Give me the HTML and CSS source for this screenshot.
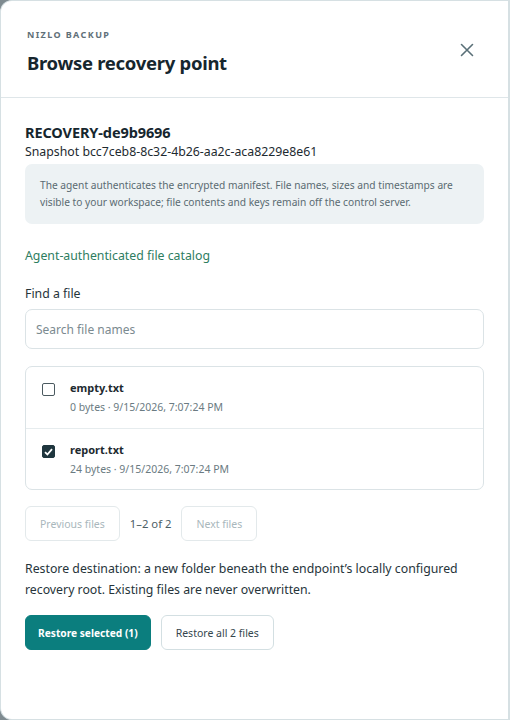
FILE: index.html
```html
<!DOCTYPE html>
<html lang="en">
<head>
    <meta charset="UTF-8">
    <meta name="viewport" content="width=device-width, initial-scale=1.0">
    <title>Browse recovery point</title>
    <link rel="stylesheet" href="styles.css">
</head>
<body>
    <div class="sheet">
        <div class="sheet-header">
            <div>
                <div class="eyebrow">NIZLO BACKUP</div>
                <h1 class="title">Browse recovery point</h1>
            </div>
            <button class="close" aria-label="Close">
                <svg width="14" height="14" viewBox="0 0 14 14">
                    <path d="M1.5 1.5 L12.5 12.5 M12.5 1.5 L1.5 12.5" stroke="#5a7078" stroke-width="1.6" stroke-linecap="round" fill="none"/>
                </svg>
            </button>
        </div>

        <div class="sheet-body">
            <div class="point-name">RECOVERY-de9b9696</div>
            <div class="point-snap">Snapshot bcc7ceb8-8c32-4b26-aa2c-aca8229e8e61</div>

            <div class="note">
                The agent authenticates the encrypted manifest. File names, sizes and timestamps are
                visible to your workspace; file contents and keys remain off the control server.
            </div>

            <div class="catalog">Agent-authenticated file catalog</div>

            <label class="field-label" for="search">Find a file</label>
            <input type="text" id="search" class="search" placeholder="Search file names">

            <div class="files">
                <label class="file">
                    <span class="box"></span>
                    <span class="file-info">
                        <span class="file-name">empty.txt</span>
                        <span class="file-meta">0 bytes · 9/15/2026, 7:07:24 PM</span>
                    </span>
                </label>
                <label class="file">
                    <span class="box checked">
                        <svg width="9" height="8" viewBox="0 0 9 8">
                            <path d="M1 4.2 L3.4 6.5 L8 1.2" stroke="#fff" stroke-width="1.8" fill="none"/>
                        </svg>
                    </span>
                    <span class="file-info">
                        <span class="file-name">report.txt</span>
                        <span class="file-meta">24 bytes · 9/15/2026, 7:07:24 PM</span>
                    </span>
                </label>
            </div>

            <div class="pager">
                <button class="ghost" disabled>Previous files</button>
                <span class="count">1–2 of 2</span>
                <button class="ghost" disabled>Next files</button>
            </div>

            <p class="dest">Restore destination: a new folder beneath the endpoint’s locally configured recovery root. Existing files are never overwritten.</p>

            <div class="actions">
                <button class="primary">Restore selected (1)</button>
                <button class="secondary">Restore all 2 files</button>
            </div>
        </div>
    </div>
</body>
</html>
```

FILE: styles.css
```css
body {
    margin: 0;
    background-color: #7f8b90;
    font-family: "Noto Sans", "Open Sans", sans-serif;
    color: #1d2a30;
}

.sheet {
    box-sizing: border-box;
    width: 510px;
    height: 720px;
    background-color: #fff;
    border: 1px solid #d6e0e3;
    border-right-width: 2px;
    border-radius: 12px 0 0 12px;
    overflow: hidden;
}

.sheet-header {
    display: flex;
    justify-content: space-between;
    align-items: flex-start;
    padding: 27px 26px 22px 26px;
    border-bottom: 1px solid #dfe6e9;
}

.eyebrow {
    font-size: 9px;
    font-weight: 700;
    letter-spacing: 1.4px;
    color: #5f7078;
}

.title {
    margin: 9px 0 0 0;
    font-size: 18.5px;
    letter-spacing: -0.3px;
    font-weight: 700;
    color: #16262e;
}

.close {
    margin-top: 15px;
    margin-right: 8px;
    padding: 0;
    border: none;
    background: none;
    cursor: pointer;
}

.sheet-body {
    padding: 24px 24px 0 24px;
}

.point-name {
    font-size: 14.5px;
    font-weight: 700;
    letter-spacing: -0.1px;
    color: #16262e;
}

.point-snap {
    font-size: 12.3px;
    color: #1d2a30;
    margin-top: 1px;
}

.note {
    margin-top: 4px;
    padding: 13px 15px 13px 15px;
    background-color: #edf2f4;
    border-radius: 7px;
    font-size: 10.2px;
    line-height: 17px;
    color: #5a6b72;
}

.catalog {
    margin-top: 23px;
    font-size: 12.3px;
    color: #2e7d5f;
}

.field-label {
    display: block;
    margin-top: 21px;
    font-size: 12.3px;
    color: #26343a;
}

.search {
    box-sizing: border-box;
    display: block;
    width: 100%;
    height: 40px;
    margin-top: 7px;
    padding: 0 10px;
    border: 1px solid #dbe3e6;
    border-radius: 7px;
    font-family: inherit;
    font-size: 12px;
    color: #26343a;
}

.search::placeholder {
    color: #7b8a90;
}

.files {
    margin-top: 17px;
    border: 1px solid #dbe3e6;
    border-radius: 7px;
}

.file {
    display: flex;
    align-items: flex-start;
    height: 61px;
    box-sizing: border-box;
    padding: 13px 16px;
    cursor: pointer;
}

.file + .file {
    border-top: 1px solid #e6ecee;
}

.box {
    box-sizing: border-box;
    width: 13px;
    height: 13px;
    margin-top: 3px;
    border: 1px solid #4b5a60;
    border-radius: 2px;
    display: flex;
    align-items: center;
    justify-content: center;
}

.box.checked {
    background-color: #1f363e;
    border-color: #1f363e;
}

.file-info {
    display: flex;
    flex-direction: column;
    margin-left: 15px;
}

.file-name {
    font-size: 11px;
    font-weight: 700;
    color: #1d2a30;
}

.file-meta {
    margin-top: 5px;
    font-size: 10.5px;
    color: #6b7b82;
}

.pager {
    display: flex;
    align-items: center;
    gap: 10px;
    margin-top: 16px;
}

.ghost {
    height: 35px;
    padding: 0 14px;
    background: #fff;
    border: 1px solid #e3e9eb;
    border-radius: 6px;
    font-family: inherit;
    font-size: 10.5px;
    color: #a9b7bc;
}

.count {
    font-size: 11.3px;
    color: #4d5e65;
}

.dest {
    margin: 17px 0 0 0;
    font-size: 12.3px;
    line-height: 21px;
    color: #26343a;
}

.actions {
    display: flex;
    gap: 10px;
    margin-top: 15px;
}

.actions button {
    height: 35px;
    padding: 0 14px;
    border-radius: 6px;
    font-family: inherit;
    cursor: pointer;
}

.actions .primary {
    padding: 0 12px;
    background-color: #0b7e7e;
    border: 1px solid #0b7e7e;
    color: #fff;
    font-size: 10.2px;
    font-weight: 700;
}

.secondary {
    background-color: #fff;
    border: 1px solid #d3dfe2;
    color: #34464d;
    font-size: 10.5px;
}
```
